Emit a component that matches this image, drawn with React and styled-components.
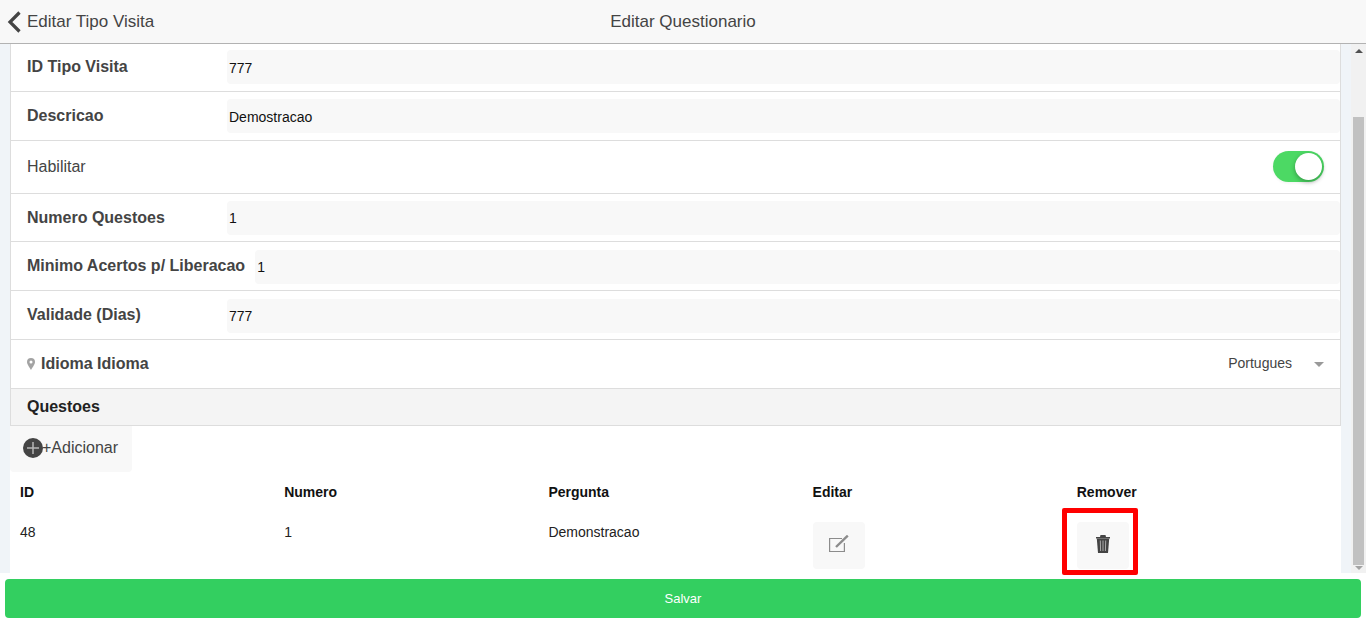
import React from 'react';
import styled, { createGlobalStyle } from 'styled-components';

const Global = createGlobalStyle`
  html, body { margin: 0; padding: 0; height: 100%; background: #fff; }
  body { font-family: "Liberation Sans", Arial, sans-serif; overflow: hidden; }
  * { box-sizing: border-box; }
`;
const Page = styled.div`
  width: 1366px; height: 623px; display: flex; flex-direction: column; background: #fff;
`;
const Header = styled.header`
  height: 44px; flex: none; display: grid; grid-template-columns: 1fr auto 1fr; align-items: center;
  background: #f8f8f8; border-bottom: 1px solid #b2b2b2; color: #444; font-size: 17px;
`;
const Back = styled.div`
  display: flex; align-items: center; padding-left: 7px; gap: 6px; color: #444;
`;
const Title = styled.div`
  color: #444; font-size: 17px;
`;
const Middle = styled.div`
  height: 529px; flex: none; display: flex;
`;
const Gutter = styled.div`
  width: ${p => p.$w}px; flex: none; background: #f0f4f8;
`;
const Content = styled.main`
  flex: 1; min-width: 0; display: flex; flex-direction: column; background: #fff;
`;
const List = styled.div`
  border-left: 1px solid #ddd; border-right: 1px solid #ddd;
`;
const Row = styled.div`
  height: ${p => p.$h}px; display: flex; align-items: center; padding: 0 16px 0 16px; border-bottom: 1px solid #ddd;
`;
const InputRow = styled(Row)`
  padding-right: 0; align-items: flex-start; padding-top: ${p => p.$top}px;
`;
const Label = styled.label`
  flex: none; min-width: 200px; padding-right: 10px; font-size: 16px; font-weight: 700; color: #444;
  line-height: 18px; margin-top: ${p => p.$mt || 0}px;
`;
const Field = styled.div`
  flex: 1; height: 34px; padding: ${p => p.$pad}px 2px 0; background: #f8f8f8; border-radius: 4px;
  font-size: 14px; line-height: 32px; color: #111;
`;
const PlainLabel = styled.span`
  font-size: 16px; color: #444; flex: 1;
`;
const Toggle = styled.div`
  width: 51px; height: 31px; border-radius: 16px; background: #4cd964; padding: 2px 2px 2px 22px;
  margin-top: -1px; box-shadow: 0 1px 3px rgba(0,0,0,0.06);
`;
const Knob = styled.div`
  width: 27px; height: 27px; border-radius: 50%; background: #fff; box-shadow: 0 2px 5px rgba(0,0,0,0.3);
`;
const SelectLabel = styled.div`
  flex: 1; display: flex; align-items: center; gap: 6px; font-size: 16px; font-weight: 700; color: #444;
`;
const SelectValue = styled.span`
  font-size: 14px; color: #444; margin-right: 22px; margin-top: -2px;
`;
const Caret = styled.span`
  width: 0; height: 0; border-left: 5px solid transparent; border-right: 5px solid transparent;
  border-top: 5px solid #999;
`;
const Divider = styled.div`
  height: 37px; display: flex; align-items: center; padding-left: 16px; background: #f4f4f4;
  border-bottom: 1px solid #ddd; font-size: 16px; font-weight: 700; color: #222;
`;
const AddButton = styled.div`
  width: 122px; height: 46px; display: flex; align-items: center; padding: 0 0 2px 13px;
  background: #f8f8f8; border-radius: 0 0 4px 4px; font-size: 16px; color: #444;
`;
const AddIcon = styled.svg`
  margin-right: -1px;
`;
const Table = styled.div`
  display: grid; grid-template-columns: repeat(5, 264.2px); padding: 0 0 0 10px;
  font-size: 14px; color: #111;
`;
const Th = styled.div`
  height: 36px; padding-top: 12px; line-height: 16px; font-weight: 700; color: #111;
`;
const Td = styled.div`
  height: 65px; padding-top: ${p => p.$top ?? 16}px; line-height: 16px; color: #222;
`;
const Highlight = styled.div`
  width: 76px; height: 67px; margin: 0 0 0 -15px; border: 5px solid #f00; border-radius: 2px;
  padding: 9px 0 0 10px;
`;
const IconButton = styled.div`
  width: 52px; height: 47px; display: flex; align-items: center; justify-content: center;
  background: #f8f8f8; border-radius: 4px;
`;
const LiftedIcon = styled.svg`
  margin-bottom: 3px;
`;
const Scrollbar = styled.div`
  width: 15px; flex: none; background: #f1f1f1; display: flex; flex-direction: column; align-items: center;
`;
const ArrowUp = styled.span`
  width: 0; height: 0; flex: none; margin-top: 5px; border-left: 4px solid transparent; border-right: 4px solid transparent;
  border-bottom: 4px solid #505050;
`;
const ThumbSpace = styled.div`
  flex: 1; width: 100%; padding: 64px 2px 0; min-height: 0;
`;
const Thumb = styled.div`
  width: 11px; height: 448px; background: #c1c1c1;
`;
const ArrowDown = styled.span`
  width: 0; height: 0; flex: none; margin-bottom: 3px; border-left: 4px solid transparent; border-right: 4px solid transparent;
  border-top: 4px solid #a3a3a3;
`;
const Footer = styled.footer`
  flex: 1; padding: 6px 5px 5px;
`;
const SaveButton = styled.div`
  height: 39px; background: #33cf60; border-radius: 4px; color: #fff; font-size: 13px;
  display: flex; align-items: center; justify-content: center;
`;

const fields = [
  { label: 'Numero Questoes', value: '1', h: 48, top: 7, mt: 8, pad: 1 },
  { label: 'Minimo Acertos p/ Liberacao', value: '1', h: 49, top: 8, mt: 7, pad: 1 },
  { label: 'Validade (Dias)', value: '777', h: 49, top: 8, mt: 7, pad: 1 },
];

const InputLine = ({ label, value, h, top, mt, pad = 2 }) => (
  <InputRow $h={h} $top={top}>
    <Label $mt={mt}>{label}</Label>
    <Field $pad={pad}>{value}</Field>
  </InputRow>
);

export default function App() {
  return (
    <Page>
      <Global />
      <Header>
        <Back>
          <svg width="14" height="22" viewBox="0 0 14 22"><path d="M12.500 1.500 L3 11 L12.500 20.500" fill="none" stroke="#444" strokeWidth="3.200" /></svg>
          <span>Editar Tipo Visita</span>
        </Back>
        <Title>Editar Questionario</Title>
        <div />
      </Header>
      <Middle>
        <Gutter $w={10} />
        <Content>
          <List>
            <InputLine label="ID Tipo Visita" value="777" h={48} top={6} mt={8} />
            <InputLine label="Descricao" value="Demostracao" h={49} top={7} mt={8} />
            <Row $h={53}>
              <PlainLabel>Habilitar</PlainLabel>
              <Toggle><Knob /></Toggle>
            </Row>
            {fields.map(f => <InputLine key={f.label} {...f} />)}
            <Row $h={49}>
              <SelectLabel>
                <svg width="8" height="12" viewBox="0 0 8 12"><path fillRule="evenodd" d="M4 0a4 4 0 0 1 4 4c0 2.500-3 6-4 8C3 10 0 6.500 0 4a4 4 0 0 1 4-4Zm0 2.500a1.500 1.500 0 1 0 0 3 1.500 1.500 0 0 0 0-3Z" fill="#a3a3a3" /></svg>
                Idioma Idioma
              </SelectLabel>
              <SelectValue>Portugues</SelectValue>
              <Caret />
            </Row>
            <Divider>Questoes</Divider>
          </List>
          <AddButton>
            <AddIcon width="20" height="20" viewBox="0 0 20 20"><circle cx="10" cy="10" r="10" fill="#444" /><path d="M10 4v12M4 10h12" stroke="#b5b5b5" strokeWidth="1.500" /></AddIcon>
            +Adicionar
          </AddButton>
          <Table>
            <Th>ID</Th><Th>Numero</Th><Th>Pergunta</Th><Th>Editar</Th><Th>Remover</Th>
            <Td>48</Td><Td>1</Td><Td>Demonstracao</Td>
            <Td $top={14}>
              <IconButton>
                <LiftedIcon width="20" height="18" viewBox="0 0 20 18">
                  <path d="M13 3.500H0.600V16.500H15.400V8" fill="none" stroke="#8c8c8c" strokeWidth="1.200" />
                  <path d="M7 12 L18.800 0.600" stroke="#8c8c8c" strokeWidth="2.400" />
                </LiftedIcon>
              </IconButton>
            </Td>
            <Td $top={0}>
              <Highlight>
                <IconButton>
                  <LiftedIcon width="14" height="18" viewBox="0 0 14 18">
                    <path d="M0 2h14v1.600H0zM4.500 0h5L10 2H4z" fill="#444" />
                    <path d="M0.800 3.600h12.400L12 18H2Z" fill="#444" />
                    <path d="M4.300 5.500l.3 10.500M7 5.500V16M9.700 5.500l-.3 10.500" stroke="#aaa" strokeWidth="1" fill="none" />
                  </LiftedIcon>
                </IconButton>
              </Highlight>
            </Td>
          </Table>
        </Content>
        <Gutter $w={10} />
        <Scrollbar>
          <ArrowUp />
          <ThumbSpace><Thumb /></ThumbSpace>
          <ArrowDown />
        </Scrollbar>
      </Middle>
      <Footer><SaveButton>Salvar</SaveButton></Footer>
    </Page>
  );
}
